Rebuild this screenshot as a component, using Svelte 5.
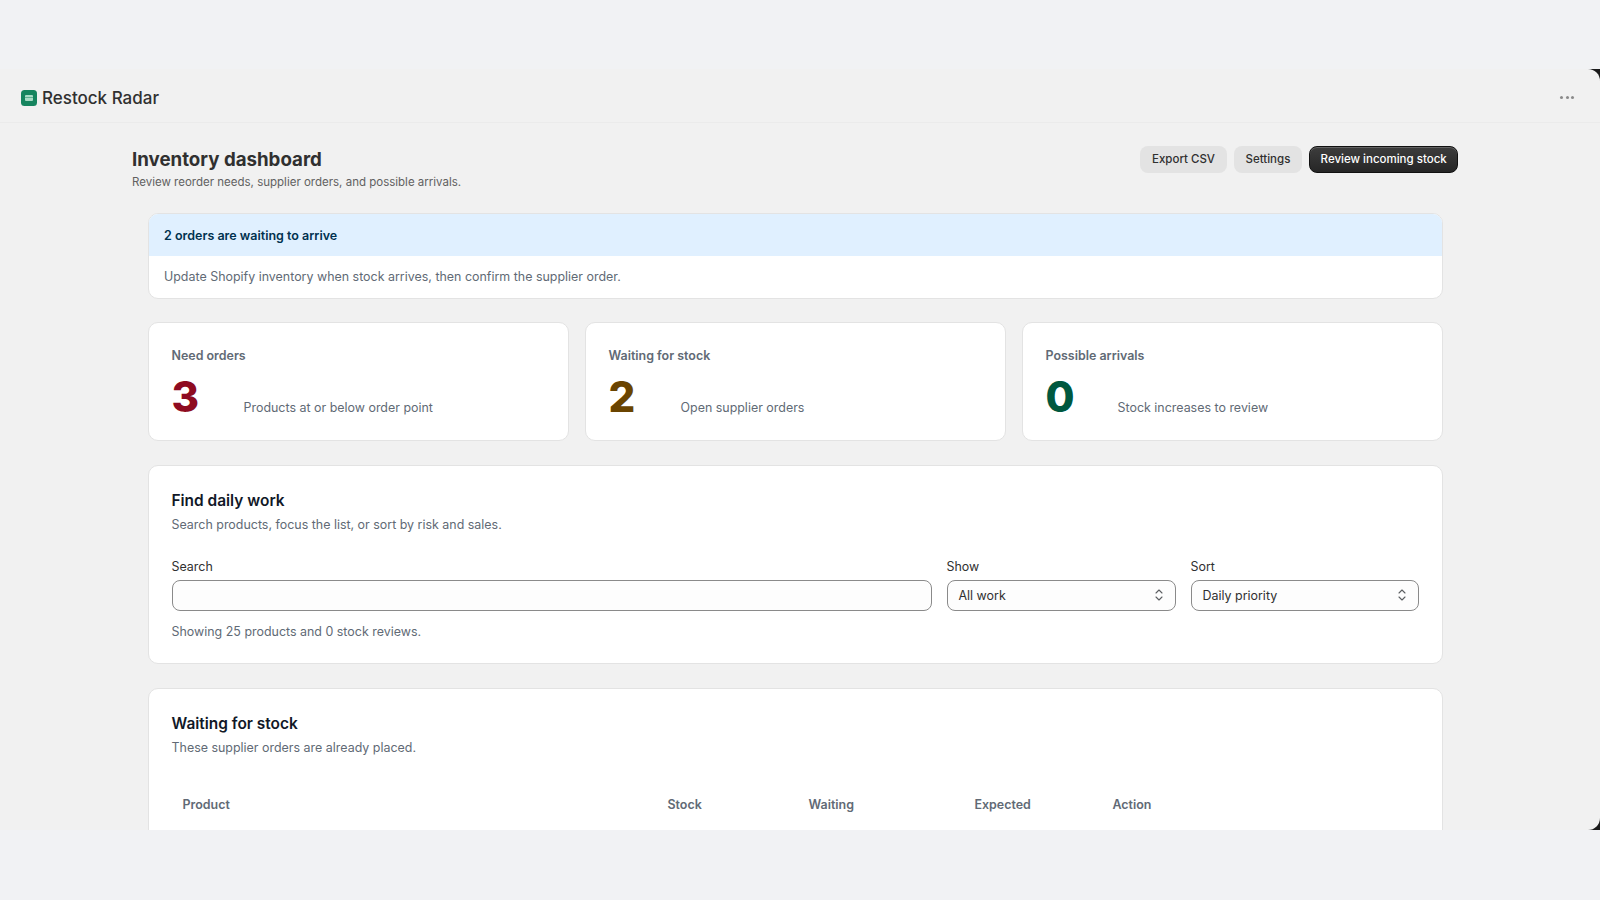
<script>
  const stats = [
    { label: 'Need orders', value: 3, note: 'Products at or below order point', tone: 'critical' },
    { label: 'Waiting for stock', value: 2, note: 'Open supplier orders', tone: 'caution' },
    { label: 'Possible arrivals', value: 0, note: 'Stock increases to review', tone: 'success' },
  ];
  const columns = ['Product', 'Stock', 'Waiting', 'Expected', 'Action'];
</script>

<div class="screen">
  <div class="frame">
    <div class="app">
      <header class="titlebar">
        <div class="brand">
          <svg class="logo" width="16" height="16" viewBox="0 0 16 16" aria-hidden="true">
            <rect width="16" height="16" rx="3.5" fill="#16855f" />
            <rect x="4" y="5" width="8" height="6" rx="1" fill="#a9dcc6" />
            <rect x="4" y="7" width="8" height="1" fill="#16855f" opacity="0.5" />
          </svg>
          <span>Restock Radar</span>
        </div>
        <div class="more" aria-label="More"><i></i><i></i><i></i></div>
      </header>

      <main class="page">
        <div class="page-head">
          <div>
            <h1>Inventory dashboard</h1>
            <p>Review reorder needs, supplier orders, and possible arrivals.</p>
          </div>
          <div class="actions">
            <button class="btn">Export CSV</button>
            <button class="btn">Settings</button>
            <button class="btn primary">Review incoming stock</button>
          </div>
        </div>

        <div class="stack">
          <section class="banner card">
            <div class="banner-head">2 orders are waiting to arrive</div>
            <div class="banner-body">Update Shopify inventory when stock arrives, then confirm the supplier order.</div>
          </section>

          <div class="stats">
            {#each stats as s}
              <section class="card stat">
                <div class="stat-label">{s.label}</div>
                <div class="stat-row">
                  <span class="stat-value {s.tone}">{s.value}</span>
                  <span class="stat-note">{s.note}</span>
                </div>
              </section>
            {/each}
          </div>

          <section class="card panel">
            <h2>Find daily work</h2>
            <p class="sub">Search products, focus the list, or sort by risk and sales.</p>
            <div class="filters">
              <div class="field">
                <span class="field-label">Search</span>
                <div class="input"></div>
              </div>
              <div class="field">
                <span class="field-label">Show</span>
                <div class="input select">
                  <span>All work</span>
                  <svg width="10" height="14" viewBox="0 0 10 14" fill="none" stroke="#5c5f62" stroke-width="1.1" stroke-linecap="round" stroke-linejoin="round" aria-hidden="true"><path d="M2 5l3-3 3 3M2 9l3 3 3-3" /></svg>
                </div>
              </div>
              <div class="field">
                <span class="field-label">Sort</span>
                <div class="input select">
                  <span>Daily priority</span>
                  <svg width="10" height="14" viewBox="0 0 10 14" fill="none" stroke="#5c5f62" stroke-width="1.1" stroke-linecap="round" stroke-linejoin="round" aria-hidden="true"><path d="M2 5l3-3 3 3M2 9l3 3 3-3" /></svg>
                </div>
              </div>
            </div>
            <p class="sub count">Showing 25 products and 0 stock reviews.</p>
          </section>

          <section class="card panel">
            <h2>Waiting for stock</h2>
            <p class="sub">These supplier orders are already placed.</p>
            <div class="table-head">
              {#each columns as c}
                <span>{c}</span>
              {/each}
            </div>
            <div class="table-body"></div>
          </section>
        </div>
      </main>
    </div>
  </div>
</div>

<style>
  :global(body) {
    margin: 0;
    background: #f1f2f4;
  }

  .screen {
    height: 900px;
    padding: 69px 0 70px;
    box-sizing: border-box;
    font-family: Inter, "Liberation Sans", sans-serif;
    color: #303030;
  }

  .frame {
    height: 761px;
    background: #1a1a1a;
    overflow: hidden;
  }

  .app {
    height: 100%;
    background: #f1f1f1;
    border-radius: 0 12px 12px 0;
    overflow: hidden;
  }

  .titlebar {
    height: 54px;
    box-sizing: border-box;
    padding: 4px 26px 0 21px;
    display: flex;
    align-items: center;
    justify-content: space-between;
    border-bottom: 1px solid #ebebeb;
  }

  .brand {
    display: flex;
    align-items: center;
    gap: 5px;
    font-size: 17px;
    font-weight: 500;
    color: #303030;
  }

  .more {
    display: flex;
    gap: 2.5px;
  }

  .more i {
    width: 3px;
    height: 3px;
    border-radius: 50%;
    background: #8a8a8a;
  }

  .page {
    width: 1326px;
    margin-left: 132px;
    padding-top: 23px;
  }

  .page-head {
    display: flex;
    justify-content: space-between;
    align-items: flex-start;
    margin-bottom: 23px;
  }

  h1 {
    margin: 0;
    font-size: 18.7px;
    line-height: 28px;
    font-weight: 650;
    color: #303030;
  }

  .page-head p {
    margin: 0;
    font-size: 11.5px;
    line-height: 16px;
    color: #616161;
  }

  .actions {
    display: flex;
    gap: 7.5px;
  }

  .btn {
    height: 27px;
    padding: 0 11.5px 0.5px;
    border: 0;
    border-radius: 8px;
    background: #e3e3e3;
    font: 550 11.5px Inter, "Liberation Sans", sans-serif;
    color: #303030;
  }

  .btn.primary {
    background: linear-gradient(#3d3d3d, #262626);
    border: 1px solid #111;
    padding: 0 10.25px 0.5px;
    color: #fff;
    box-shadow: inset 0 1px 0 rgba(255, 255, 255, 0.2);
  }

  .stack {
    width: 1295px;
    margin: 0 auto;
    display: flex;
    flex-direction: column;
    gap: 23.5px;
  }

  .card {
    background: #fff;
    border: 1px solid #e3e3e3;
    border-radius: 10px;
    box-sizing: border-box;
  }

  .banner {
    overflow: hidden;
  }

  .banner-head {
    height: 42px;
    padding: 0 15.5px;
    display: flex;
    align-items: center;
    background: #e0f0ff;
    color: #00324f;
    font-size: 12.5px;
    font-weight: 600;
  }

  .banner-body {
    height: 41.5px;
    padding: 0 15.5px;
    display: flex;
    align-items: center;
    font-size: 12.45px;
    color: #616a75;
  }

  .stats {
    display: grid;
    grid-template-columns: repeat(3, 1fr);
    gap: 16px;
  }

  .stat {
    height: 119px;
    padding: 25px 23px 0;
  }

  .stat-label {
    font-size: 12.45px;
    line-height: 16px;
    font-weight: 600;
    color: #616a75;
  }

  .stat-row {
    display: flex;
    align-items: flex-end;
    margin-top: 7px;
  }

  .stat-value {
    width: 72px;
    font-size: 42px;
    line-height: 52px;
    font-weight: 800;
  }

  .critical { color: #8e0b21; }
  .caution { color: #6a4400; }
  .success { color: #00583f; }

  .stat-note {
    font-size: 12.45px;
    line-height: 16px;
    color: #616a75;
    padding-bottom: 7px;
  }

  .panel {
    padding: 24px 23px 23.5px;
  }

  h2 {
    margin: 0;
    font-size: 15.45px;
    line-height: 21px;
    font-weight: 600;
    color: #111827;
  }

  .sub {
    margin: 6px 0 0;
    font-size: 12.45px;
    line-height: 16px;
    color: #616a75;
  }

  .filters {
    display: grid;
    grid-template-columns: 760px 229px 228px;
    gap: 15px;
    margin-top: 26px;
  }

  .field-label {
    display: block;
    font-size: 12.45px;
    line-height: 16px;
    color: #303030;
    margin-bottom: 5px;
  }

  .input {
    height: 31px;
    box-sizing: border-box;
    border: 1px solid #8a8a8a;
    border-radius: 8px;
    background: #fdfdfd;
  }

  .select {
    display: flex;
    align-items: center;
    justify-content: space-between;
    padding: 0 11px;
    font-size: 12.45px;
    color: #303030;
  }

  .count {
    margin-top: 13px;
  }

  .table-head {
    display: grid;
    grid-template-columns: 485px 141px 166px 138px 1fr;
    padding: 0 11px;
    margin-top: 41px;
    font-size: 12.45px;
    line-height: 16px;
    font-weight: 600;
    color: #616a75;
  }

  .table-body {
    height: 120px;
    margin-top: 17px;
    border-top: 1px solid #f1f1f1;
  }
</style>
